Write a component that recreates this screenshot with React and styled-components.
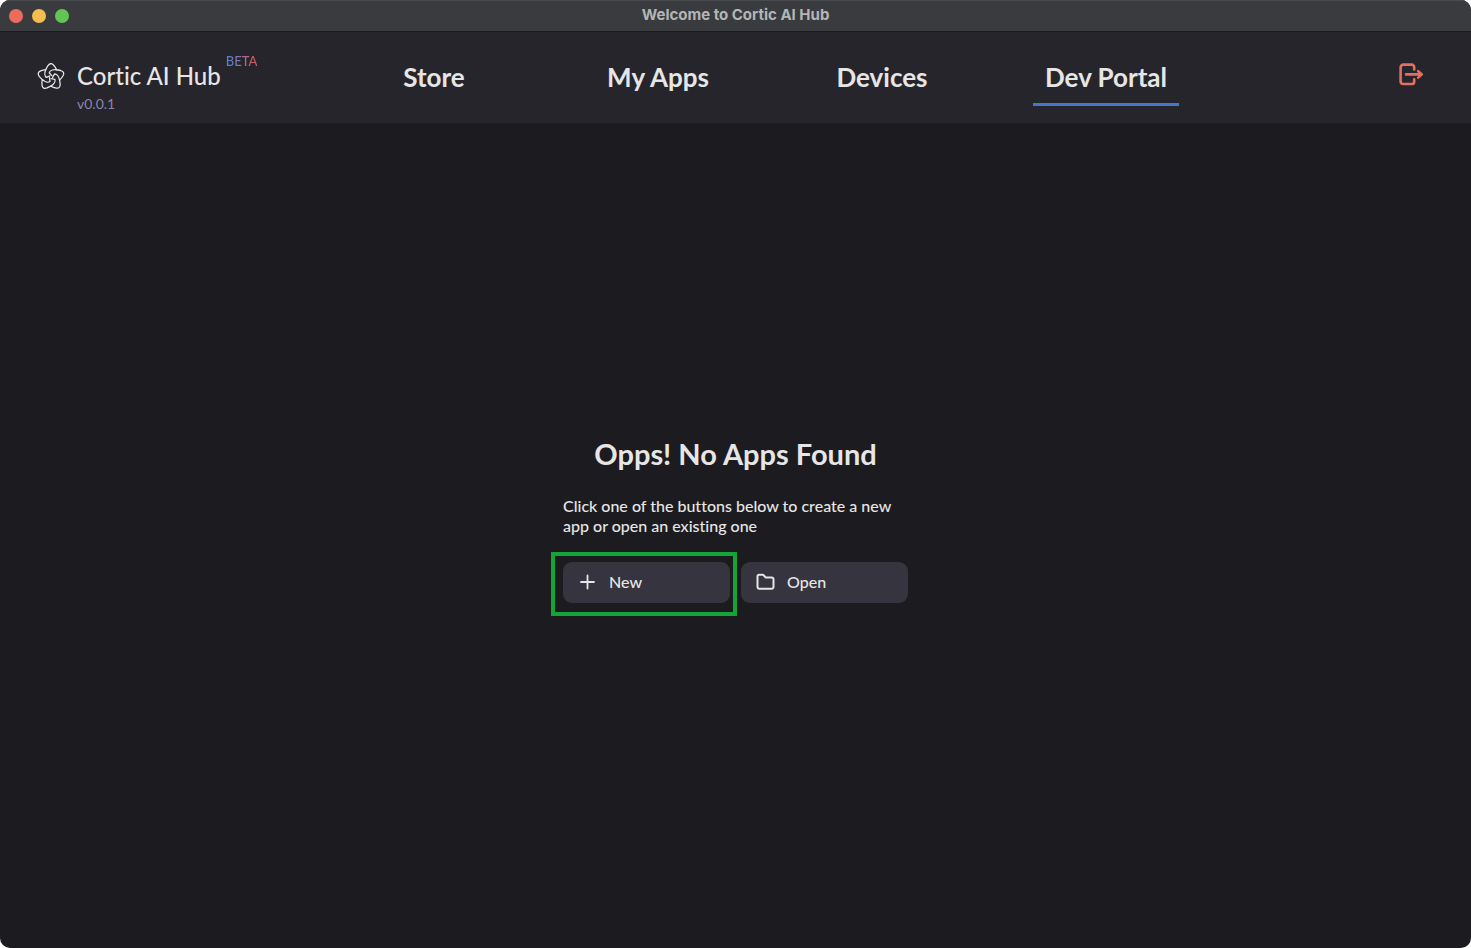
import React from "react";
import styled, { createGlobalStyle } from "styled-components";

const GlobalStyle = createGlobalStyle`
  *, *::before, *::after { box-sizing: border-box; }
  body { margin: 0; background: #fff; }
  h1, p { margin: 0; }
`;

const Window = styled.div`
  display: flex;
  flex-direction: column;
  min-height: 100vh;
  overflow: hidden;
  border-radius: 10px;
  background: #1c1b20;
  color: #e6e6e6;
  font-family: Lato, sans-serif;
  font-variant-ligatures: none;
`;

const TitleBar = styled.div`
  display: grid;
  grid-template-columns: 1fr auto 1fr;
  align-items: center;
  height: 32px;
  padding: 0 9px;
  background: #3a3b3e;
  border-top: 1px solid #4a4b4e;
  border-bottom: 1px solid #1a191d;
`;

const Lights = styled.div`
  display: flex;
  gap: 9px;
`;

const Light = styled.span`
  width: 14px;
  height: 14px;
  border-radius: 50%;
  background: ${(p) => p.$color};
`;

const WindowTitle = styled.div`
  padding-bottom: 2px;
  color: #b4b5b6;
  font: 700 15px/28px Inter, sans-serif;
`;

const Header = styled.header`
  display: grid;
  grid-template-columns: 322px 1fr 253px;
  height: 91px;
  background: #26252b;
`;

const Brand = styled.div`
  display: flex;
  align-items: flex-start;
  padding: 29px 0 0 37px;
`;

const LogoMark = styled.svg`
  width: 28px;
  height: 32px;
  margin-right: 12px;
`;

const BrandName = styled.div`
  font-size: 24px;
  font-weight: 500;
  line-height: 30px;
`;

const Version = styled.div`
  color: #8b84ad;
  font-size: 14px;
  line-height: 26px;
`;

const Beta = styled.span`
  margin: -8px 0 0 5px;
  background: linear-gradient(90deg, #4a86dc, #e05a55);
  background-clip: text;
  color: transparent;
  font-size: 13px;
  font-weight: 500;
  line-height: 16px;
`;

const Nav = styled.nav`
  display: grid;
  grid-template-columns: repeat(4, 1fr);
  justify-items: center;
  align-items: start;
`;

const NavLink = styled.a`
  height: 74px;
  padding: 29px 12px 0;
  border-bottom: 3px solid ${(p) => (p.$active ? "#4478cb" : "transparent")};
  color: inherit;
  font-size: 26px;
  font-weight: 700;
  line-height: 32px;
  text-decoration: none;
`;

const LogoutButton = styled.button`
  justify-self: end;
  align-self: start;
  display: flex;
  margin: 28px 47px 0 0;
  padding: 0;
  border: 0;
  background: none;
  color: #e26f62;
  cursor: pointer;
`;

const Main = styled.main`
  flex: 1;
  display: flex;
  flex-direction: column;
  align-items: center;
  justify-content: center;
  padding-bottom: 32px;
`;

const EmptyState = styled.section`
  width: 345px;
`;

const Heading = styled.h1`
  margin-bottom: 24px;
  font-size: 29px;
  line-height: 36px;
  text-align: center;
`;

const Hint = styled.p`
  margin-bottom: 26px;
  font-size: 16px;
  font-weight: 500;
  line-height: 20px;
`;

const Actions = styled.div`
  display: grid;
  grid-template-columns: 1fr 1fr;
  gap: 11px;
`;

const ActionButton = styled.button`
  position: relative;
  display: flex;
  align-items: center;
  gap: 12px;
  height: 41px;
  padding: 0 14px 2px;
  border: 0;
  border-radius: 9px;
  background: #36343f;
  color: inherit;
  font: 500 16px/20px Lato, sans-serif;
  cursor: pointer;
`;

const HighlightedButton = styled(ActionButton)`
  &::after {
    content: "";
    position: absolute;
    inset: -10px -7px -13px -12px;
    border: 4px solid #13a538;
    pointer-events: none;
  }
`;

const Icon = styled.svg`
  display: block;
  fill: none;
  stroke: currentColor;
  stroke-linecap: round;
  stroke-linejoin: round;
`;

const PETALS = [0, 72, 144, 216, 288];
const TABS = ["Store", "My Apps", "Devices", "Dev Portal"];

export default function App() {
  return (
    <>
      <GlobalStyle />
      <Window>
        <TitleBar>
          <Lights>
            <Light $color="#ed6a5f" />
            <Light $color="#f5bd4f" />
            <Light $color="#61c454" />
          </Lights>
          <WindowTitle>Welcome to Cortic AI Hub</WindowTitle>
        </TitleBar>
        <Header>
          <Brand>
            <LogoMark viewBox="-14 -16 28 32" fill="none" stroke="#e6e6e6" strokeWidth="1.3" strokeLinecap="round" strokeLinejoin="round" aria-hidden="true">
              {PETALS.map((angle) => (
                <path
                  key={angle}
                  transform={`rotate(${angle})`}
                  d="M-5.2 -7.5L-3.2 -11.2Q-0.6 -14.8 2.2 -12.2Q4.6 -9.8 5.5 -7.2C2.2 -7.6 -1.2 -6.4 -1.8 -4.2L0.8 -1.4"
                />
              ))}
            </LogoMark>
            <div>
              <BrandName>Cortic AI Hub</BrandName>
              <Version>v0.0.1</Version>
            </div>
            <Beta>BETA</Beta>
          </Brand>
          <Nav>
            {TABS.map((tab) => (
              <NavLink key={tab} href="#" $active={tab === "Dev Portal"}>
                {tab}
              </NavLink>
            ))}
          </Nav>
          <LogoutButton aria-label="Log out">
            <Icon width="26" height="28" viewBox="0 0 26 28" strokeWidth="2.6">
              <path d="M16.2 9.4V7.2A2.6 2.6 0 0 0 13.6 4.6H5.4A2.8 2.8 0 0 0 2.6 7.4v13.8a2.8 2.8 0 0 0 2.8 2.8h8.2a2.6 2.6 0 0 0 2.6-2.6V19.4" />
              <path d="M8 14.4h15.6M20.2 11.2l3.6 3.2-3.6 3.2" />
            </Icon>
          </LogoutButton>
        </Header>
        <Main>
          <EmptyState>
            <Heading>Opps! No Apps Found</Heading>
            <Hint>Click one of the buttons below to create a new app or open an existing one</Hint>
            <Actions>
              <HighlightedButton>
                <Icon width="20" height="20" viewBox="0 0 20 20" strokeWidth="1.8" aria-hidden="true">
                  <path d="M10.5 3.5v13M4 10h13" />
                </Icon>
                New
              </HighlightedButton>
              <ActionButton>
                <Icon width="20" height="20" viewBox="0 0 20 20" strokeWidth="2" aria-hidden="true">
                  <path d="M2.5 15V4.6A1.8 1.8 0 0 1 4.3 2.8h3.2a1.8 1.8 0 0 1 1.4.7l1.6 1.9h6.2a1.8 1.8 0 0 1 1.8 1.8V15a1.8 1.8 0 0 1-1.8 1.8H4.3A1.8 1.8 0 0 1 2.5 15Z" />
                </Icon>
                Open
              </ActionButton>
            </Actions>
          </EmptyState>
        </Main>
      </Window>
    </>
  );
}
